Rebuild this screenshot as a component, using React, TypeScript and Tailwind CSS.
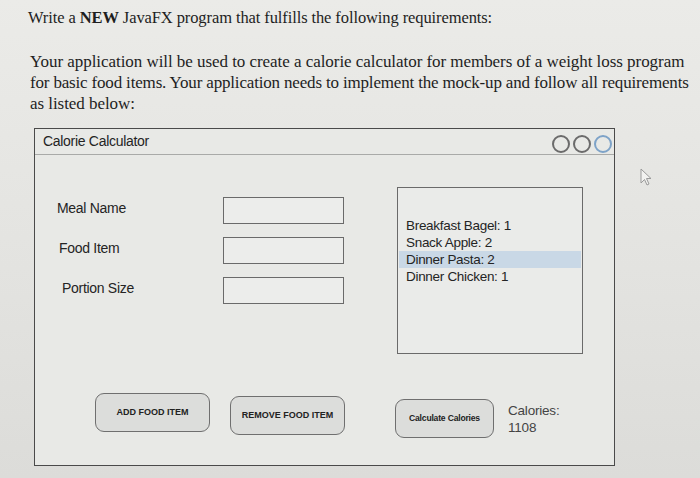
import React from "react";

const sans = { fontFamily: '"Liberation Sans", Arial, sans-serif' };
const serif = { fontFamily: '"Liberation Serif", "Times New Roman", serif' };

function Field() {
  return <div className="w-[121px] h-[27px] border border-[#6a6a6a] bg-[#ecedeb]" />;
}

function Btn({ label, w, size }: { label: string; w: string; size: string }) {
  return (
    <div
      className={`${w} h-[39px] rounded-[9px] border border-[#6f6f6f] bg-[#dcdddb] flex items-center justify-center font-bold text-[#222] ${size}`}
    >
      {label}
    </div>
  );
}

export default function App() {
  const items = ["Breakfast Bagel: 1", "Snack Apple: 2", "Dinner Pasta: 2", "Dinner Chicken: 1"];
  return (
    <div className="relative w-[700px] h-[478px] overflow-hidden bg-gradient-to-b from-[#ebebe8] via-[#e4e4e1] to-[#dcdcd9]">
      <div className="pl-[28px] pt-[8px] text-[#1e1e1e] whitespace-nowrap" style={serif}>
        <div className="text-[16.5px] leading-[20px] tracking-[-0.1px]">
          Write a <span className="font-bold">NEW</span> JavaFX program that fulfills the following requirements:
        </div>
        <div className="mt-[23px] pl-[2px] text-[17px] leading-[21px] tracking-[-0.05px]">
          <div>Your application will be used to create a calorie calculator for members of a weight loss program</div>
          <div className="tracking-[-0.17px]">for basic food items. Your application needs to implement the mock-up and follow all requirements</div>
          <div>as listed below:</div>
        </div>
      </div>

      <div
        className="ml-[34px] mt-[14px] w-[581px] h-[338px] border border-[#4a4a4a] bg-[#e8e9e6] flex flex-col text-[#242424]"
        style={sans}
      >
        <div className="h-[26px] border-b border-[#a9aaa8] flex justify-between pl-[8px] pr-[2px]">
          <span className="text-[14px] tracking-[-0.3px] self-center">Calorie Calculator</span>
          <div className="flex gap-[3px] self-end mb-[1px]">
            <div className="w-[18px] h-[18px] rounded-full border-[2px] border-[#6b6b6b]" />
            <div className="w-[18px] h-[18px] rounded-full border-[2px] border-[#6b6b6b]" />
            <div className="w-[18px] h-[18px] rounded-full border-[2px] border-[#7ea3c8]" />
          </div>
        </div>

        <div className="flex pl-[22px] pt-[32px]">
          <div className="flex flex-col gap-[13px] pt-[10px] w-[288px]">
            <div className="flex items-center">
              <span className="w-[166px] text-[14px] tracking-[-0.3px] -mt-[5px]">Meal Name</span>
              <Field />
            </div>
            <div className="flex items-center">
              <span className="w-[166px] text-[14px] tracking-[-0.3px] pl-[2px] -mt-[5px]">Food Item</span>
              <Field />
            </div>
            <div className="flex items-center">
              <span className="w-[166px] text-[14px] tracking-[-0.3px] pl-[5px] -mt-[5px]">Portion Size</span>
              <Field />
            </div>
          </div>
          <div className="ml-[52px] w-[186px] h-[167px] border border-[#6a6a6a] bg-[#eaebe9] pt-[29px] pl-[1px] pr-[1px]">
            {items.map((t, i) => (
              <div
                key={t}
                className={`h-[17px] leading-[17px] pl-[7px] text-[13.5px] tracking-[-0.3px] ${
                  i === 2 ? "bg-[#c9d8e6]" : ""
                }`}
              >
                {t}
              </div>
            ))}
          </div>
        </div>

        <div className="flex items-start pl-[60px] mt-[39px]">
          <Btn label="ADD FOOD ITEM" w="w-[115px]" size="text-[9px]" />
          <div className="ml-[20px] mt-[3px]">
            <Btn label="REMOVE FOOD ITEM" w="w-[115px]" size="text-[9px]" />
          </div>
          <div className="ml-[50px] mt-[6px]">
            <Btn label="Calculate Calories" w="w-[99px]" size="text-[8.6px] tracking-[-0.2px]" />
          </div>
          <div className="ml-[14px] mt-[9px] text-[13.5px] leading-[17px] text-[#444] tracking-[-0.2px]">
            <div>Calories:</div>
            <div>1108</div>
          </div>
        </div>
      </div>

      <svg className="absolute left-[640px] top-[168px]" width="14" height="20" viewBox="0 0 14 20">
        <path d="M1 1 L1 15 L4.5 11.5 L7 17 L9 16 L6.5 10.5 L11 10.5 Z" fill="#f2f2f0" stroke="#9a9a9a" strokeWidth="1" strokeLinejoin="round" />
      </svg>
    </div>
  );
}
